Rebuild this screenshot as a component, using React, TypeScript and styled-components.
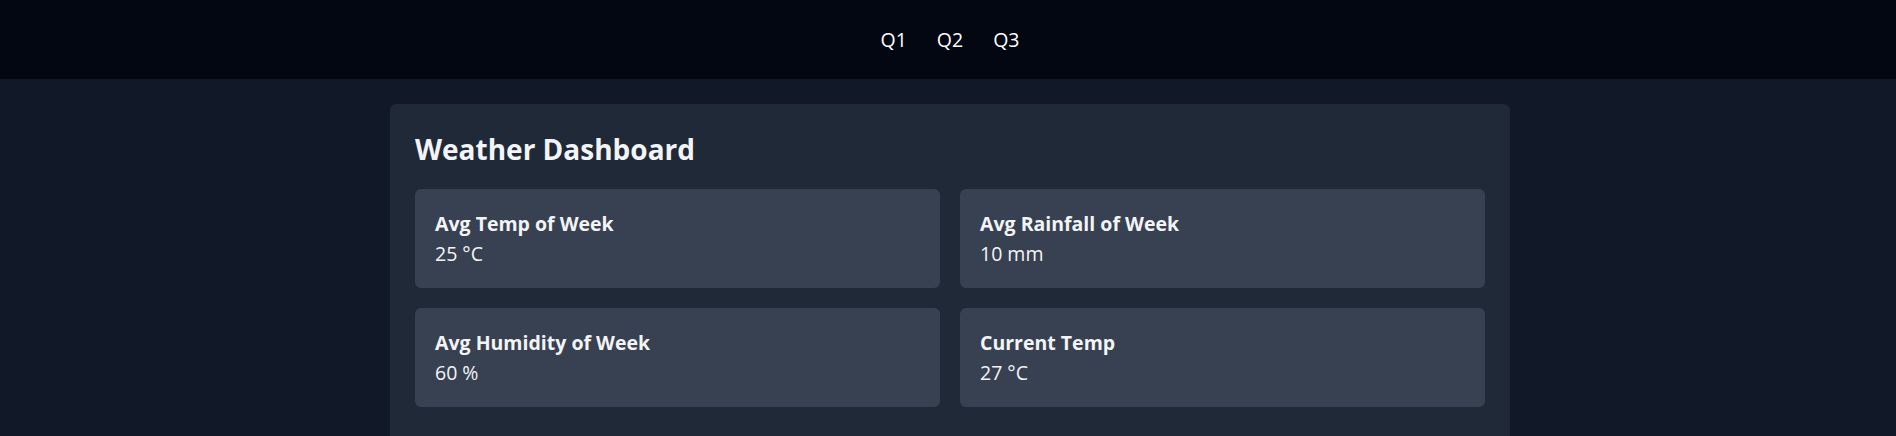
import React from "react";
import styled, { createGlobalStyle } from "styled-components";

const GlobalStyle = createGlobalStyle`
  * {
    box-sizing: border-box;
  }

  body {
    margin: 0;
    background: #111827;
    color: #f3f4f6;
    font-family: "Open Sans", "Noto Sans", sans-serif;
  }
`;

const Page = styled.div`
  min-height: 100vh;
  background: #111827;
`;

const Nav = styled.nav`
  height: 79px;
  padding-left: 4px;
  background: #030712;
  display: flex;
  align-items: center;
  justify-content: center;
  gap: 30px;
`;

const NavLink = styled.a`
  color: #ffffff;
  font-size: 19.5px;
  line-height: 30px;
  text-decoration: none;
  cursor: pointer;
`;

const Main = styled.main`
  width: 1120px;
  margin: 25px 0 0 calc(50% - 558px);
`;

const Panel = styled.section`
  background: #1f2937;
  border-radius: 6px;
  padding: 25px 25px 50px;
`;

const Title = styled.h1`
  margin: 0 0 20px;
  font-size: 28px;
  line-height: 40px;
  font-weight: 700;
  color: #f3f4f6;
`;

const Grid = styled.div`
  display: grid;
  grid-template-columns: repeat(2, 1fr);
  gap: 20px;
`;

const Card = styled.div`
  background: #374151;
  border-radius: 6px;
  padding: 20px;
  height: 99px;
`;

const CardTitle = styled.h2`
  margin: 0;
  font-size: 19.5px;
  line-height: 30px;
  font-weight: 700;
  color: #f3f4f6;
`;

const CardValue = styled.p`
  margin: 0;
  font-size: 19.5px;
  line-height: 30px;
  color: #f3f4f6;
`;

const stats = [
  { label: "Avg Temp of Week", value: "25 °C" },
  { label: "Avg Rainfall of Week", value: "10 mm" },
  { label: "Avg Humidity of Week", value: "60 %" },
  { label: "Current Temp", value: "27 °C" },
];

const App = () => {
  return (
    <Page>
      <GlobalStyle />
      <Nav>
        <NavLink>Q1</NavLink>
        <NavLink>Q2</NavLink>
        <NavLink>Q3</NavLink>
      </Nav>
      <Main>
        <Panel>
          <Title>Weather Dashboard</Title>
          <Grid>
            {stats.map((s) => (
              <Card key={s.label}>
                <CardTitle>{s.label}</CardTitle>
                <CardValue>{s.value}</CardValue>
              </Card>
            ))}
          </Grid>
        </Panel>
      </Main>
    </Page>
  );
};

export default App;
